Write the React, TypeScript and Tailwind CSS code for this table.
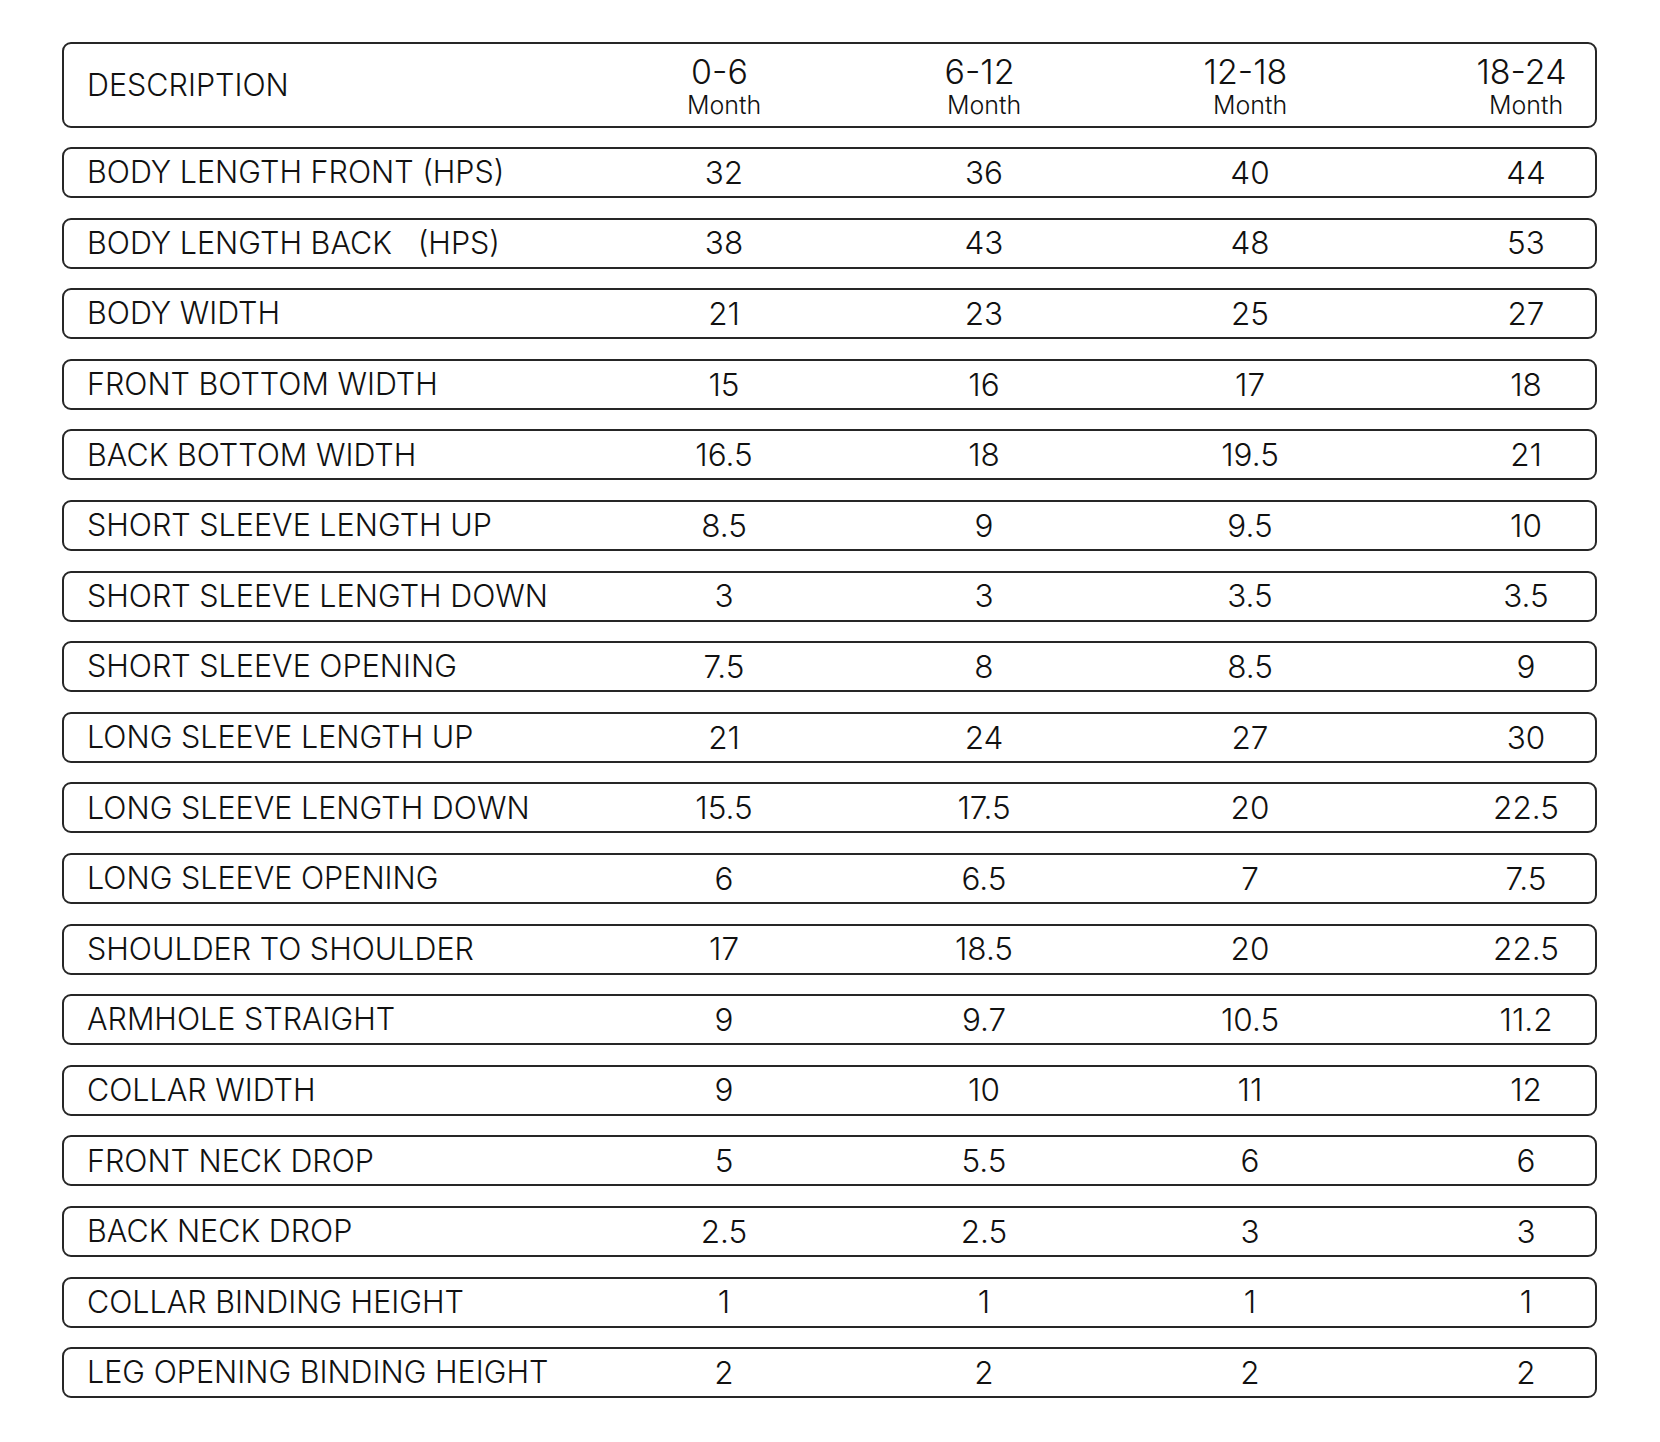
import React from "react";

const rows: [string, string, string, string, string][] = [
  ["BODY LENGTH FRONT (HPS)", "32", "36", "40", "44"],
  ["BODY LENGTH BACK   (HPS)", "38", "43", "48", "53"],
  ["BODY WIDTH", "21", "23", "25", "27"],
  ["FRONT BOTTOM WIDTH", "15", "16", "17", "18"],
  ["BACK BOTTOM WIDTH", "16.5", "18", "19.5", "21"],
  ["SHORT SLEEVE LENGTH UP", "8.5", "9", "9.5", "10"],
  ["SHORT SLEEVE LENGTH DOWN", "3", "3", "3.5", "3.5"],
  ["SHORT SLEEVE OPENING", "7.5", "8", "8.5", "9"],
  ["LONG SLEEVE LENGTH UP", "21", "24", "27", "30"],
  ["LONG SLEEVE LENGTH DOWN", "15.5", "17.5", "20", "22.5"],
  ["LONG SLEEVE OPENING", "6", "6.5", "7", "7.5"],
  ["SHOULDER TO SHOULDER", "17", "18.5", "20", "22.5"],
  ["ARMHOLE STRAIGHT", "9", "9.7", "10.5", "11.2"],
  ["COLLAR WIDTH", "9", "10", "11", "12"],
  ["FRONT NECK DROP", "5", "5.5", "6", "6"],
  ["BACK NECK DROP", "2.5", "2.5", "3", "3"],
  ["COLLAR BINDING HEIGHT", "1", "1", "1", "1"],
  ["LEG OPENING BINDING HEIGHT", "2", "2", "2", "2"],
];

const headers = ["0-6", "6-12", "12-18", "18-24"];

export default function App() {
  return (
    <div
      className="w-[1660px] h-[1442px] bg-white text-[#111111] font-[350]"
      style={{ fontFamily: "Inter, 'Noto Sans', sans-serif" }}
    >
      <div className="pt-[42px] pl-[62px] w-[1597px] flex flex-col">
        <div className="h-[86px] border-2 border-[#262626] rounded-[9px] grid grid-cols-[530px_260px_260px_272px_1fr] items-center">
          <div className="pl-[23px] text-[30.5px] leading-none">DESCRIPTION</div>
          {headers.map((h, i) => (
            <div
              key={h}
              className={`flex flex-col items-center pt-[5px] ${i === 3 ? "pl-[71px]" : ""}`}
            >
              <span className="text-[34px] leading-[34px] pr-[9px]">{h}</span>
              <span className="text-[25px] leading-[30px] mt-[1px]">Month</span>
            </div>
          ))}
        </div>
        <div className="mt-[19px] flex flex-col gap-[19.6px]">
          {rows.map((r) => (
            <div
              key={r[0]}
              className="h-[51px] border-2 border-[#262626] rounded-[9px] grid grid-cols-[530px_260px_260px_272px_1fr] items-center"
            >
              <div className="pl-[23px] text-[30.5px] leading-none whitespace-pre">{r[0]}</div>
              <div className="text-center text-[31.5px] leading-none">{r[1]}</div>
              <div className="text-center text-[31.5px] leading-none">{r[2]}</div>
              <div className="text-center text-[31.5px] leading-none">{r[3]}</div>
              <div className="text-center text-[31.5px] leading-none pl-[71px]">{r[4]}</div>
            </div>
          ))}
        </div>
      </div>
    </div>
  );
}
